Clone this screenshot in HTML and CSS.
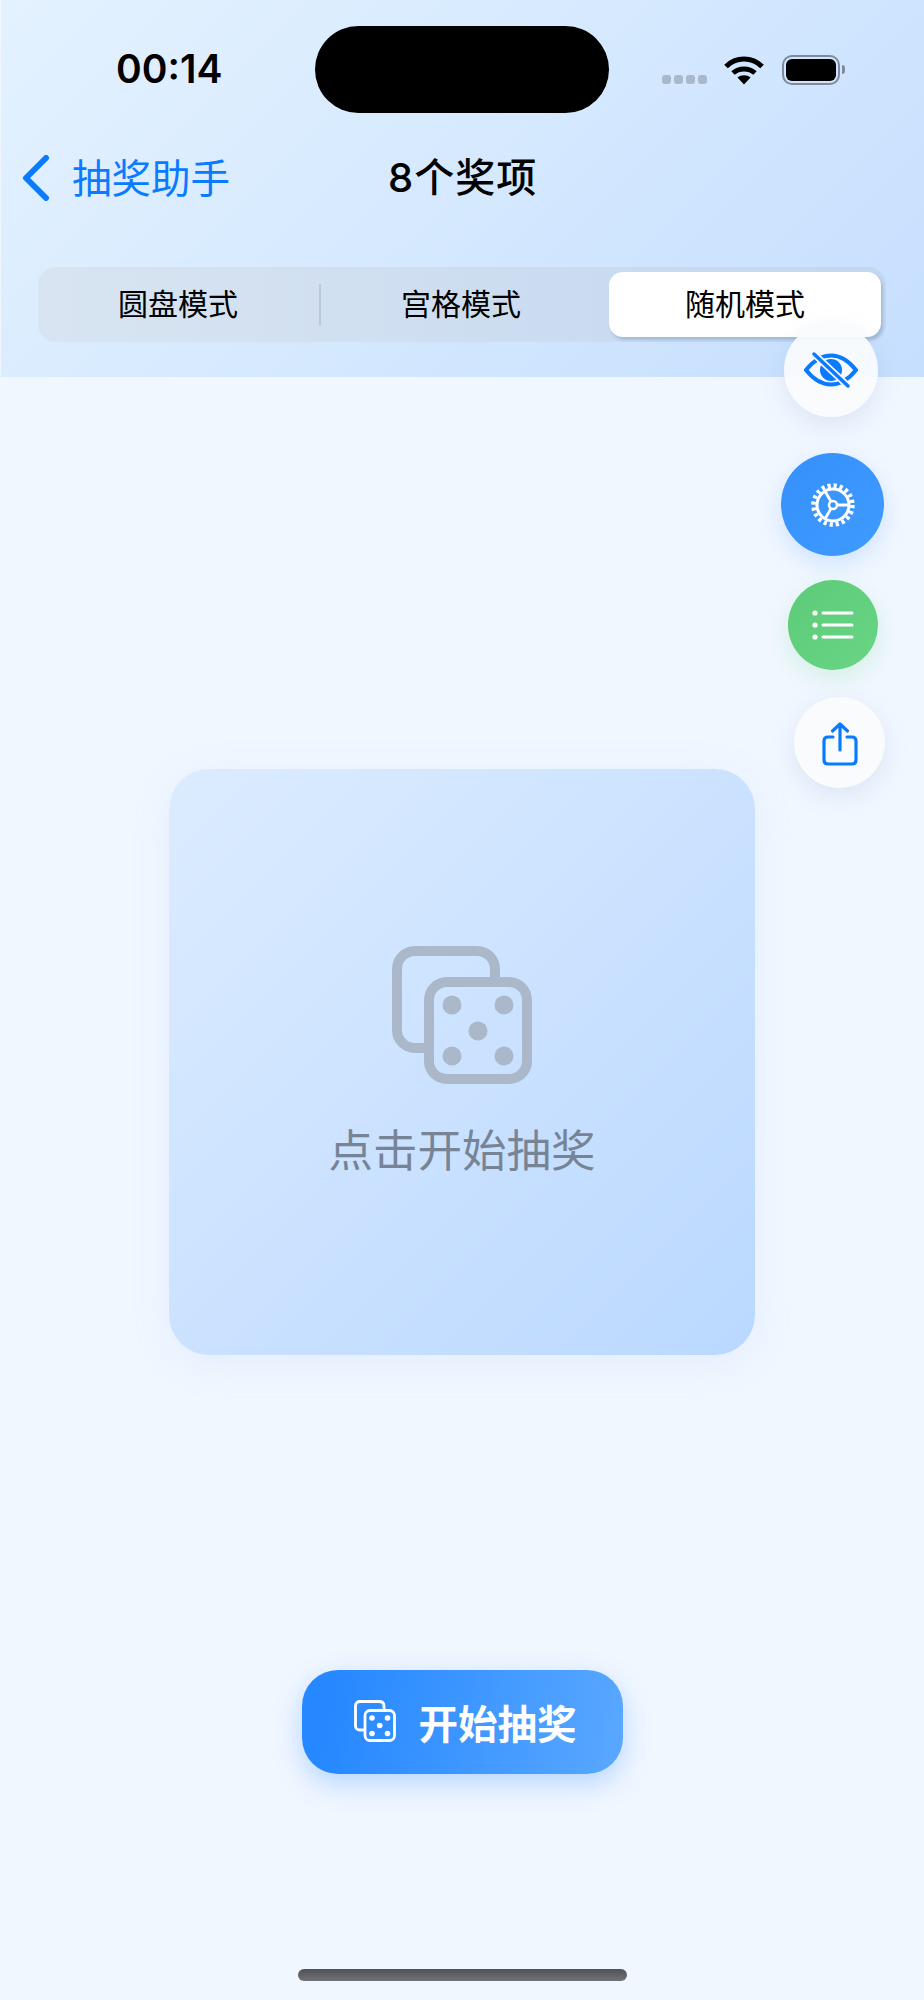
FILE: index.html
```html
<!DOCTYPE html>
<html lang="zh-CN">
<head>
    <meta charset="UTF-8">
    <meta name="viewport" content="width=device-width, initial-scale=1.0">
    <title>抽奖助手</title>
    <link rel="stylesheet" href="styles.css">
</head>
<body>
    <div class="page">
        <header class="header">
            <div class="status-bar">
                <span class="time">00:14</span>
                <div class="island"></div>
                <div class="status-icons">
                    <div class="signal"><i></i><i></i><i></i><i></i></div>
                    <svg class="wifi" width="40" height="30" viewBox="0 0 40 30">
                        <path d="M2 11.5C12 1.5 28 1.5 38 11.5" fill="none" stroke="#000" stroke-width="5"/>
                        <path d="M9 18C15 12.5 25 12.5 31 18" fill="none" stroke="#000" stroke-width="5"/>
                        <path d="M13.5 22.5C17 19.5 23 19.5 26.5 22.5L20 29.5Z" fill="#000"/>
                    </svg>
                    <div class="battery"><div class="battery-fill"></div></div>
                    <div class="battery-cap"></div>
                </div>
            </div>
            <nav class="nav">
                <a class="back">
                    <svg class="back-icon" width="30" height="46" viewBox="0 0 30 46">
                        <path d="M26 3L6 23L26 43" fill="none" stroke="#0a7aff" stroke-width="6" stroke-linecap="round" stroke-linejoin="round"/>
                    </svg>
                    <span>抽奖助手</span>
                </a>
                <h1 class="title">8个奖项</h1>
            </nav>
            <div class="segment">
                <div class="segment-item first">圆盘模式</div>
                <div class="segment-line"></div>
                <div class="segment-item second">宫格模式</div>
                <div class="segment-item active">随机模式</div>
            </div>
        </header>

        <main class="main">
            <div class="card">
                <svg width="140" height="138" viewBox="0 0 140 138">
                    <path d="M33 102H23C13 102 5 94 5 84V23C5 13 13 5 23 5H85C95 5 103 13 103 23V36" fill="none" stroke="#abb8c9" stroke-width="10"/>
                    <rect x="37" y="36" width="98" height="97" rx="18" fill="none" stroke="#abb8c9" stroke-width="10"/>
                    <circle cx="60" cy="59" r="9.5" fill="#abb8c9"/>
                    <circle cx="112" cy="59" r="9.5" fill="#abb8c9"/>
                    <circle cx="86" cy="85" r="9.5" fill="#abb8c9"/>
                    <circle cx="60" cy="110" r="9.5" fill="#abb8c9"/>
                    <circle cx="112" cy="110" r="9.5" fill="#abb8c9"/>
                </svg>
                <p class="card-text">点击开始抽奖</p>
            </div>
            <button class="start-btn">
                <svg width="42" height="42" viewBox="0 0 42 42">
                    <path d="M11 30H6C3 30 1.500 28 1.500 26V6C1.500 3 3.500 1.500 6 1.500H25C28 1.500 30 3 30 6V10.500" fill="none" stroke="#fff" stroke-width="2.800"/>
                    <rect x="11" y="10.500" width="29.500" height="30" rx="5" fill="none" stroke="#fff" stroke-width="2.800"/>
                    <circle cx="18" cy="18" r="2.800" fill="#fff"/>
                    <circle cx="33.500" cy="18" r="2.800" fill="#fff"/>
                    <circle cx="25.700" cy="25.500" r="2.800" fill="#fff"/>
                    <circle cx="18" cy="33.500" r="2.800" fill="#fff"/>
                    <circle cx="33.500" cy="33.500" r="2.800" fill="#fff"/>
                </svg>
                <span>开始抽奖</span>
            </button>
        </main>

        <div class="float-btn eye">
            <svg width="54" height="40" viewBox="0 0 54 40">
                <path d="M2 20C10 10 18 5.500 27 5.500S44 10 52 20C44 30 36 34.500 27 34.500S10 30 2 20Z" fill="none" stroke="#0a7aff" stroke-width="4"/>
                <circle cx="27" cy="20" r="11" fill="#0a7aff"/>
                <path d="M10 4L44 36" stroke="#f7f9fc" stroke-width="7"/>
                <path d="M10 4L44 36" stroke="#0a7aff" stroke-width="3.500" stroke-linecap="round"/>
            </svg>
        </div>
        <div class="float-btn gear">
            <svg width="44" height="44" viewBox="0 0 44 44">
                <circle cx="22" cy="22" r="16" fill="none" stroke="#fff" stroke-width="3"/>
                <circle cx="22" cy="22" r="19.500" fill="none" stroke="#fff" stroke-width="4.500" stroke-dasharray="3.200 2.925"/>
                <circle cx="22" cy="22" r="4" fill="none" stroke="#fff" stroke-width="2.500"/>
                <path d="M26 22H37M20 18.500L14.500 9M20 25.500L14.500 35" stroke="#fff" stroke-width="2.800"/>
            </svg>
        </div>
        <div class="float-btn list">
            <svg width="42" height="30" viewBox="0 0 42 30">
                <circle cx="3" cy="3" r="2.600" fill="#fff"/>
                <circle cx="3" cy="15" r="2.600" fill="#fff"/>
                <circle cx="3" cy="27" r="2.600" fill="#fff"/>
                <path d="M11 3H40M11 15H40M11 27H40" stroke="#fff" stroke-width="3" stroke-linecap="round"/>
            </svg>
        </div>
        <div class="float-btn share">
            <svg width="36" height="46" viewBox="0 0 36 46">
                <path d="M11 17H6C3.500 17 2 18.500 2 21V40C2 42.500 3.500 44 6 44H30C32.500 44 34 42.500 34 40V21C34 18.500 32.500 17 30 17H25" fill="none" stroke="#0a7aff" stroke-width="3.200" stroke-linecap="round"/>
                <path d="M18 30V4M10.500 11L18 4L25.500 11" fill="none" stroke="#0a7aff" stroke-width="3.200" stroke-linecap="round" stroke-linejoin="round"/>
            </svg>
        </div>

        <div class="home-bar"></div>
    </div>
</body>
</html>
```

FILE: styles.css
```css
* {
    box-sizing: border-box;
}
body {
    margin: 0;
    font-family: "Inter", "Noto Sans CJK SC", sans-serif;
    background-color: #f1f7ff;
}
.page {
    position: relative;
    width: 924px;
    height: 2000px;
    overflow: hidden;
    background-color: #f1f7ff;
}
.header {
    height: 377px;
    padding-top: 26px;
    background: linear-gradient(135deg, #e4f2ff, #c6dffe);
    box-shadow: inset 1px 0 0 rgba(255, 255, 255, 0.5);
}
.status-bar {
    display: flex;
    align-items: center;
    height: 87px;
}
.time {
    width: 315px;
    margin-top: -2px;
    padding-left: 116px;
    font-size: 39px;
    font-weight: 600;
    color: #000;
}
.island {
    width: 294px;
    height: 87px;
    border-radius: 44px;
    background-color: #000;
}
.status-icons {
    display: flex;
    align-items: center;
    padding-left: 53px;
}
.signal {
    display: flex;
    gap: 3px;
    margin-top: 20px;
    margin-right: 17px;
}
.signal i {
    width: 9px;
    height: 9px;
    border-radius: 3px;
    background-color: #a9b9cc;
}
.wifi {
    margin-right: 18px;
}
.battery {
    width: 58px;
    height: 30px;
    padding: 2px;
    border: 2.500px solid #7f8b9a;
    border-radius: 10px;
}
.battery-fill {
    height: 100%;
    border-radius: 6px;
    background-color: #000;
}
.battery-cap {
    width: 3px;
    height: 9px;
    margin-left: 2px;
    border-radius: 0 3px 3px 0;
    background-color: #7f8b9a;
}
.nav {
    display: flex;
    align-items: center;
    height: 60px;
    margin-top: 32px;
    padding-left: 20px;
}
.back {
    display: flex;
    align-items: center;
    gap: 22px;
    font-size: 39.500px;
    color: #0a7aff;
}
.back-icon {
    margin-top: 5px;
}
.title {
    margin: 0 0 0 158px;
    font-size: 40px;
    font-weight: 500;
    letter-spacing: 1px;
    color: #000;
}
.segment {
    display: flex;
    align-items: center;
    width: 848px;
    height: 75px;
    margin: 62px 0 0 38px;
    padding: 5px;
    border-radius: 18px;
    background: linear-gradient(90deg, #d8e4f1, #c3d7f0);
}
.segment-item {
    line-height: 65px;
    text-align: center;
    font-size: 30px;
    color: #000;
}
.segment-item.first {
    width: 276px;
    padding-right: 6px;
}
.segment-item.second {
    width: 288px;
    padding-right: 8px;
}
.segment-line {
    width: 2px;
    height: 42px;
    background-color: #bccadb;
}
.segment-item.active {
    width: 272px;
    border-radius: 14px;
    background-color: #fff;
    box-shadow: 2px 3px 3px rgba(120, 150, 190, 0.45);
}
.main {
    display: flex;
    flex-direction: column;
    align-items: center;
    padding-top: 392px;
}
.card {
    display: flex;
    flex-direction: column;
    align-items: center;
    width: 586px;
    height: 586px;
    padding-top: 177px;
    border-radius: 40px;
    background: linear-gradient(135deg, #dcecff, #bad8ff);
    box-shadow: 0 8px 40px rgba(120, 170, 240, 0.12);
}
.card-text {
    margin: 31px 0 0;
    font-size: 44.500px;
    color: #778495;
}
.start-btn {
    display: flex;
    align-items: center;
    justify-content: center;
    gap: 23px;
    width: 321px;
    height: 104px;
    margin-top: 315px;
    padding: 0 0 2px 6px;
    border: none;
    border-radius: 36px;
    background: linear-gradient(100deg, #2688ff 10%, #5aa8ff);
    box-shadow: 0 10px 28px rgba(50, 140, 255, 0.3);
    font-family: inherit;
    font-size: 39.500px;
    font-weight: 600;
    color: #fff;
}
.float-btn {
    position: absolute;
    display: flex;
    align-items: center;
    justify-content: center;
    border-radius: 50%;
}
.eye {
    left: 784px;
    top: 323px;
    width: 94px;
    height: 94px;
    background-color: rgba(250, 251, 253, 0.92);
    box-shadow: 0 8px 24px rgba(110, 140, 190, 0.16);
}
.gear {
    left: 781px;
    top: 453px;
    width: 103px;
    height: 103px;
    background: linear-gradient(135deg, #3590fb, #3f9bff);
    box-shadow: 0 8px 24px rgba(60, 150, 255, 0.2);
}
.list {
    left: 788px;
    top: 580px;
    width: 90px;
    height: 90px;
    background: linear-gradient(135deg, #5ccb78, #69d585);
    box-shadow: 0 8px 24px rgba(90, 210, 120, 0.2);
}
.share {
    left: 794px;
    top: 697px;
    width: 91px;
    height: 91px;
    background-color: #fafbfd;
    box-shadow: 0 8px 24px rgba(110, 140, 190, 0.16);
}
.home-bar {
    position: absolute;
    left: 298px;
    top: 1969px;
    width: 329px;
    height: 12px;
    border-radius: 6px;
    background: linear-gradient(180deg, #505257, #707276);
}
```
